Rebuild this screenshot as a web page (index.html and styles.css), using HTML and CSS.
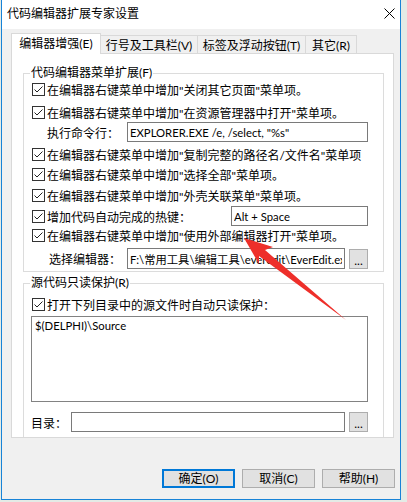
FILE: index.html
```html
<!DOCTYPE html>
<html lang="zh-CN">
<head>
<meta charset="utf-8">
<title>代码编辑器扩展专家设置</title>
<link rel="stylesheet" href="styles.css">
</head>
<body>
<div class="window">
  <div class="titlebar">
    <span class="title">代码编辑器扩展专家设置</span>
    <svg class="close" width="11" height="11" viewBox="0 0 11 11"><path d="M0.5 0.5L10.5 10.5M10.5 0.5L0.5 10.5" stroke="#000" stroke-width="1" fill="none"/></svg>
  </div>
  <div class="client">
    <div class="tabs">
      <div class="tab active t1">编辑器增强(E)</div>
      <div class="tab t2">行号及工具栏(V)</div>
      <div class="tab t3">标签及浮动按钮(T)</div>
      <div class="tab t4">其它(R)</div>
    </div>
    <div class="panel">
      <fieldset class="group g1">
        <legend>代码编辑器菜单扩展(F)</legend>
        <div class="row m0"><svg class="cb" viewBox="0 0 13 13"><rect x="0.5" y="0.5" width="12" height="12" fill="#fff" stroke="#333"/><path d="M2.5 6.5L5 9L10.5 3.5" stroke="#222" fill="none"/></svg>在编辑器右键菜单中增加"关闭其它页面"菜单项。</div>
        <div class="row m5"><svg class="cb" viewBox="0 0 13 13"><rect x="0.5" y="0.5" width="12" height="12" fill="#fff" stroke="#333"/><path d="M2.5 6.5L5 9L10.5 3.5" stroke="#222" fill="none"/></svg>在编辑器右键菜单中增加"在资源管理器中打开"菜单项。</div>
        <div class="row field m1"><span class="lbl cmd">执行命令行：</span><input class="edit grow" type="text" value='EXPLORER.EXE /e, /select, "%s"'></div>
        <div class="row m3"><svg class="cb" viewBox="0 0 13 13"><rect x="0.5" y="0.5" width="12" height="12" fill="#fff" stroke="#333"/><path d="M2.5 6.5L5 9L10.5 3.5" stroke="#222" fill="none"/></svg>在编辑器右键菜单中增加"复制完整的路径名/文件名"菜单项</div>
        <div class="row m2"><svg class="cb" viewBox="0 0 13 13"><rect x="0.5" y="0.5" width="12" height="12" fill="#fff" stroke="#333"/><path d="M2.5 6.5L5 9L10.5 3.5" stroke="#222" fill="none"/></svg>在编辑器右键菜单中增加"选择全部"菜单项。</div>
        <div class="row m3"><svg class="cb" viewBox="0 0 13 13"><rect x="0.5" y="0.5" width="12" height="12" fill="#fff" stroke="#333"/><path d="M2.5 6.5L5 9L10.5 3.5" stroke="#222" fill="none"/></svg>在编辑器右键菜单中增加"外壳关联菜单"菜单项。</div>
        <div class="row field m2"><svg class="cb" viewBox="0 0 13 13"><rect x="0.5" y="0.5" width="12" height="12" fill="#fff" stroke="#333"/><path d="M2.5 6.5L5 9L10.5 3.5" stroke="#222" fill="none"/></svg>增加代码自动完成的热键：<input class="edit hotkey" type="text" value="Alt + Space"></div>
        <div class="row m0"><svg class="cb" viewBox="0 0 13 13"><rect x="0.5" y="0.5" width="12" height="12" fill="#fff" stroke="#333"/><path d="M2.5 6.5L5 9L10.5 3.5" stroke="#222" fill="none"/></svg>在编辑器右键菜单中增加"使用外部编辑器打开"菜单项。</div>
        <div class="row field tall m4"><span class="lbl sel">选择编辑器：</span><input class="edit grow" type="text" value="F:\常用工具\编辑工具\everedit\EverEdit.exe"><button class="dots">...</button></div>
      </fieldset>
      <fieldset class="group g2">
        <legend>源代码只读保护(R)</legend>
        <div class="row m5"><svg class="cb" viewBox="0 0 13 13"><rect x="0.5" y="0.5" width="12" height="12" fill="#fff" stroke="#333"/><path d="M2.5 6.5L5 9L10.5 3.5" stroke="#222" fill="none"/></svg>打开下列目录中的源文件时自动只读保护：</div>
        <div class="memo">$(DELPHI)\Source</div>
        <div class="row field dir"><span class="lbl dirl">目录：</span><input class="edit grow" type="text" value=""><button class="dots">...</button></div>
      </fieldset>
    </div>
    <div class="buttons">
      <button class="btn default">确定(O)</button>
      <button class="btn">取消(C)</button>
      <button class="btn">帮助(H)</button>
    </div>
  </div>
</div>
<svg class="arrow" width="407" height="502" viewBox="0 0 407 502">
  <polygon points="244,238 273,247 265,250 346,320 259,256 259,264" fill="#ee2f2a"/>
</svg>
</body>
</html>
```
FILE: styles.css
```css
* { box-sizing: border-box; }

body {
  margin: 0;
  width: 407px;
  height: 502px;
  overflow: hidden;
  position: relative;
  background: #e4ebe6;
  font-family: Lato, "Noto Sans CJK SC", sans-serif;
  font-size: 12px;
  color: #000;
}

.window {
  margin-left: 1px;
  width: 400px;
  height: 500px;
  border: 1px solid #1883d7;
  border-top: 0;
  background: #f0f0f0;
  display: flex;
  flex-direction: column;
}

.titlebar {
  height: 29px;
  background: #fff;
  display: flex;
  align-items: center;
  justify-content: space-between;
  padding: 0 5px 2px 5px;
  line-height: 16px;
}

.close { flex: none; }

.client {
  flex: 1;
  padding: 4px 5px 0 9px;
}

.tabs {
  display: flex;
  align-items: flex-end;
  height: 20px;
}

.tab {
  height: 18px;
  border: 1px solid #d9d9d9;
  border-bottom: 0;
  background: #f0f0f0;
  display: flex;
  justify-content: center;
  align-items: center;
  padding-top: 3px;
  line-height: 14px;
  margin-left: -1px;
  white-space: nowrap;
}

.tab.active {
  height: 21px;
  margin-left: 0;
  margin-bottom: -1px;
  background: #fff;
  position: relative;
  z-index: 1;
  padding-top: 0;
}

.t1 { width: 90px; }
.t2 { width: 98px; }
.t3 { width: 109px; }
.t4 { width: 52px; }

.panel {
  width: 383px;
  height: 385px;
  border: 1px solid #d9d9d9;
  background: #fff;
  overflow: hidden;
}

.group {
  margin: 12px 9px 0 11px;
  padding: 0 0 2px 0;
  border: 1px solid #dcdcdc;
  min-width: 0;
}

.group legend {
  margin-left: 6px;
  padding: 0 1px;
  line-height: 14px;
}

.g2 {
  margin-top: 4px;
  padding-bottom: 12px;
}

.row {
  display: flex;
  align-items: center;
  height: 18px;
  margin: 0 15px 0 8px;
  white-space: nowrap;
}

.row.field { height: 20px; }
.row.tall { height: 21px; }

.m0 { margin-top: 0; }
.m1 { margin-top: 1px; }
.m2 { margin-top: 2px; }
.m3 { margin-top: 3px; }
.m4 { margin-top: 4px; }
.m5 { margin-top: 5px; }

.cb {
  width: 13px;
  height: 13px;
  margin-right: 2px;
  flex: none;
}

.lbl { flex: none; }
.cmd { margin-left: 15px; width: 80px; }
.sel { margin-left: 17px; width: 78px; }
.dirl { margin-left: -1px; width: 40px; }

.edit {
  height: 100%;
  border: 1px solid #7a7a7a;
  padding: 0 2px;
  font-family: inherit;
  font-size: 11.3px;
  color: #000;
  background: #fff;
  outline: none;
  min-width: 0;
}

.grow { flex: 1; }

.hotkey {
  margin-left: auto;
  width: 137px;
  flex: none;
}

.dots {
  flex: none;
  width: 19px;
  height: 20px;
  margin-left: 4px;
  border: 1px solid #adadad;
  background: #e1e1e1;
  font: inherit;
  padding: 4px 0 0;
  line-height: 12px;
}

.memo {
  margin: 3px 15px 0 7px;
  height: 86px;
  border: 1px solid #828282;
  padding: 2px 3px;
  line-height: 14px;
  font-size: 11.3px;
}

.dir {
  margin-left: 8px;
  margin-top: 10px;
}

.buttons {
  display: flex;
  justify-content: flex-end;
  gap: 7px;
  margin-top: 31px;
}

.btn {
  width: 73px;
  height: 19px;
  border: 1px solid #adadad;
  background: #e1e1e1;
  font: inherit;
  padding: 0;
  line-height: 15px;
  color: #000;
}

.btn.default {
  border: 2px solid #0078d7;
}

.arrow {
  position: absolute;
  top: 0;
  left: 0;
  pointer-events: none;
}
```
